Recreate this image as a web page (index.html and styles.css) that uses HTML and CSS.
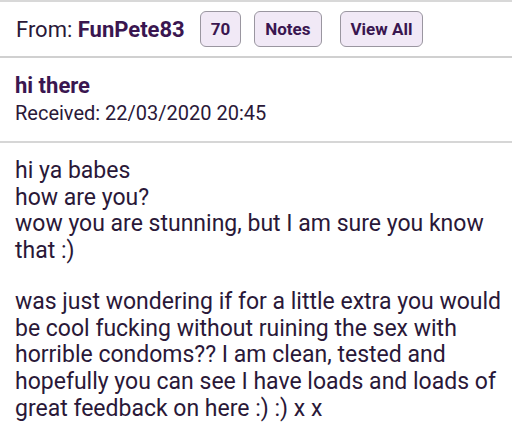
FILE: index.html
```html
<!DOCTYPE html>
<html>
<head>
<meta charset="utf-8">
<link rel="stylesheet" href="styles.css">
</head>
<body>
<div class="page">
  <div class="from-row">
    <span class="from">From: <b class="name">FunPete83</b></span>
    <span class="btn">70</span>
    <span class="btn">Notes</span>
    <span class="btn btn-wide">View All</span>
  </div>
  <div class="subject">
    <div class="title">hi there</div>
    <div class="received">Received: 22/03/2020 20:45</div>
  </div>
  <div class="body">
    <p>hi ya babes<br>how are you?<br>wow you are stunning, but I am sure you know that :)</p>
    <p>was just wondering if for a little extra you would be cool fucking without ruining the sex with horrible condoms?? I am clean, tested and hopefully you can see I have loads and loads of great feedback on here :) :) x x</p>
  </div>
</div>
</body>
</html>
```

FILE: styles.css
```css
html, body {
  margin: 0;
  padding: 0;
  background: #ffffff;
}
body {
  font-family: Roboto, "Liberation Sans", sans-serif;
  color: #2a1838;
}
.page {
  border-top: 2px solid #d8d8d8;
  width: 512px;
}
.from-row {
  display: flex;
  align-items: center;
  height: 54px;
  padding-left: 16px;
  border-bottom: 2px solid #d0d0d0;
}
.from {
  font-size: 22px;
  margin-right: 15px;
}
.name {
  color: #3a1650;
  font-weight: 700;
}
.btn {
  display: inline-flex;
  align-items: center;
  justify-content: center;
  box-sizing: border-box;
  height: 36px;
  padding: 0 10px;
  margin-right: 13px;
  border: 1.5px solid #9a96a0;
  border-radius: 6px;
  background: #f1e9f6;
  color: #3a1650;
  font-weight: 700;
  font-size: 17px;
}
.btn-wide {
  margin-left: 5px;
}
.subject {
  padding: 14px 15px 14px;
  border-bottom: 2px solid #d6d6d6;
}
.title {
  font-size: 22px;
  font-weight: 700;
  color: #3a1650;
  line-height: 28px;
}
.received {
  font-size: 20px;
  line-height: 27px;
}
.body {
  padding: 15px 2px 0 15px;
  font-size: 23px;
  line-height: 26.7px;
}
.body p {
  margin: 0 0 24px;
}
```
